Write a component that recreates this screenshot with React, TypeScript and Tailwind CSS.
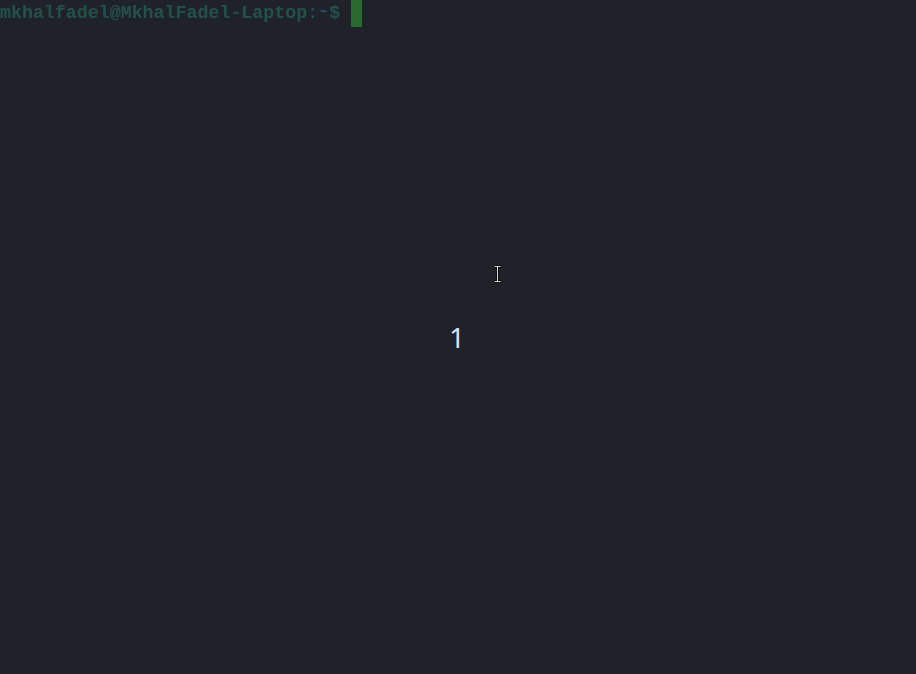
export default function App() {
  return (
    <div className="relative w-[916px] h-[674px] overflow-hidden bg-[#1f2229]">
      <div className="flex items-start font-['Liberation_Mono',monospace] text-[18.3px] leading-[27px] font-bold">
        <span className="text-[#23504a]">mkhalfadel@MkhalFadel-Laptop:</span>
        <span className="w-[11px] text-center text-[#2c5a8a] text-[12px]">~</span>
        <span className="text-[#23504a]">$&nbsp;</span>
        <span className="w-[11px] h-[27px] bg-[#2b6a2f]" />
      </div>

      {/* mouse pointer overlay */}
      <svg className="absolute left-[493px] top-[265px]" width="9" height="18" viewBox="0 0 9 18">
        <path d="M1 1.5h7M1 16.5h7M4.5 1.5v15" stroke="#0c0c0c" strokeWidth="3" fill="none" />
        <path d="M1.5 1.5h6M1.5 16.5h6M4.5 1.5v15" stroke="#d8d8d8" strokeWidth="1" fill="none" />
      </svg>

      {/* keystroke overlay */}
      <div className="absolute left-[449px] top-[317px] font-['Noto_Sans',sans-serif] text-[28px] leading-[40px] text-[#d6e4f2]">
        1
      </div>
    </div>
  );
}
